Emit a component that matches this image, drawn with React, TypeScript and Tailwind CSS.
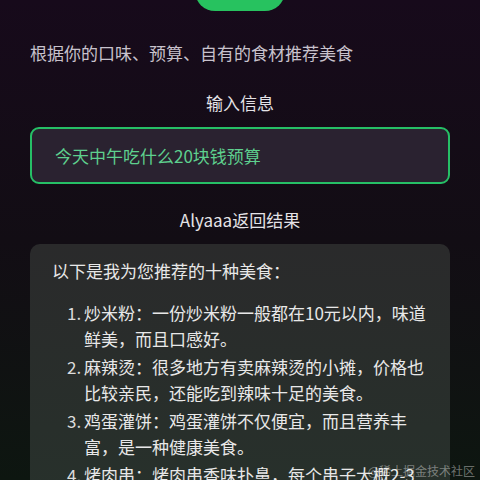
const items = [
  { n: '1.', t: '炒米粉：一份炒米粉一般都在10元以内，味道鲜美，而且口感好。' },
  { n: '2.', t: '麻辣烫：很多地方有卖麻辣烫的小摊，价格也比较亲民，还能吃到辣味十足的美食。' },
  { n: '3.', t: '鸡蛋灌饼：鸡蛋灌饼不仅便宜，而且营养丰富，是一种健康美食。' },
  { n: '4.', t: '烤肉串：烤肉串香味扑鼻，每个串子大概2-3元，经济实惠。' },
];

export default function App() {
  return (
    <div
      className="relative h-[480px] w-[480px] overflow-hidden bg-gradient-to-b from-[#170a1b] via-[#120d14] to-[#0d1610] text-[17px] leading-[24px]"
      style={{ fontFamily: '"Noto Sans CJK SC", "Noto Sans", sans-serif' }}
    >
      {/* submit button, scrolled mostly off screen */}
      <div className="flex justify-center">
        <button className="-mt-[29px] h-10 w-[90px] rounded-[20px] bg-[#27c25f] font-medium text-[#0d2a16]">
          生成
        </button>
      </div>

      <p className="mt-[30px] px-[30px] text-[#c8c2cc]">根据你的口味、预算、自有的食材推荐美食</p>

      <h2 className="mt-[26px] text-center text-[#e4e2e6]">输入信息</h2>

      <div className="mx-[30px] mt-3 flex h-[57px] items-center rounded-[9px] border-[2.5px] border-[#26bf66] bg-[#2a2230] px-[23px] text-[#5ed08e]">
        今天中午吃什么20块钱预算
      </div>

      <h2 className="mt-6 text-center text-[#e4e2e6]">Alyaaa返回结果</h2>

      <div className="mx-[30px] mt-3 h-[260px] rounded-[10px] bg-gradient-to-b from-[#2a2a2b] to-[#27312b] pl-[22px] pt-[14px] text-[#e8e8e8]">
        <p className="leading-[26px]">以下是我为您推荐的十种美食：</p>
        <ol className="ml-[15px] mt-[16px] flex w-[365px] flex-col gap-[2px]">
          {items.map((it) => (
            <li key={it.n} className="flex leading-[26px]">
              <span className="w-[17px] shrink-0 text-[#dcdcdc]">{it.n}</span>
              <span className="w-[347px]">{it.t}</span>
            </li>
          ))}
        </ol>
      </div>

      <span className="absolute bottom-[1px] right-[5px] text-[12px] leading-[16px] text-[#ffffff]/40">
        @稀土掘金技术社区
      </span>
    </div>
  );
}
